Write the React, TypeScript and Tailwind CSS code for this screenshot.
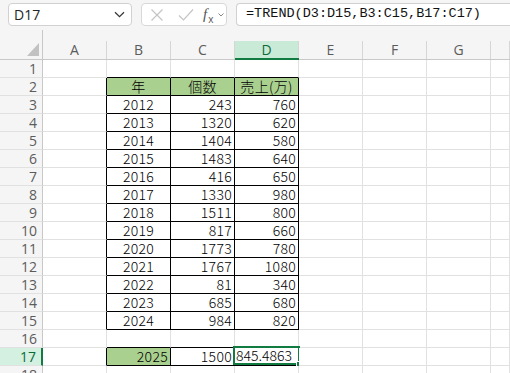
import React from "react";

const years = [2012, 2013, 2014, 2015, 2016, 2017, 2018, 2019, 2020, 2021, 2022, 2023, 2024];
const counts = [243, 1320, 1404, 1483, 416, 1330, 1511, 817, 1773, 1767, 81, 685, 984];
const sales = [760, 620, 580, 640, 650, 980, 800, 660, 780, 1080, 340, 680, 820];

const COLS = ["A", "B", "C", "D", "E", "F", "G", "H"];

function isB(r: number, c: number) {
  if (c < 1 || c > 3) return false;
  if (r >= 2 && r <= 15) return true;
  if (r === 17) return true;
  return false;
}

type CellInfo = { text: string; align: "left" | "center" | "right"; fill?: boolean };

function cellAt(r: number, c: number): CellInfo | null {
  if (r === 2) {
    if (c === 1) return { text: "年", align: "center", fill: true };
    if (c === 2) return { text: "個数", align: "center", fill: true };
    if (c === 3) return { text: "売上(万)", align: "center", fill: true };
  }
  if (r >= 3 && r <= 15) {
    const i = r - 3;
    if (c === 1) return { text: String(years[i]), align: "center" };
    if (c === 2) return { text: String(counts[i]), align: "right" };
    if (c === 3) return { text: String(sales[i]), align: "right" };
  }
  if (r === 17) {
    if (c === 1) return { text: "2025", align: "right", fill: true };
    if (c === 2) return { text: "1500", align: "right" };
    if (c === 3) return { text: "845.4863", align: "left" };
  }
  return null;
}

function Cell({ r, c }: { r: number; c: number }) {
  const info = cellAt(r, c);
  const rightBlack = isB(r, c) || isB(r, c + 1);
  const bottomBlack = isB(r, c) || isB(r + 1, c);
  const w = c === 7 ? "w-[19px]" : "w-[64px]";
  const rb = rightBlack ? "border-r-black" : "border-r-[#e1e1e1]";
  const bb = bottomBlack ? "border-b-black" : "border-b-[#e1e1e1]";
  const bg = info?.fill ? "bg-[#a9d08e]" : "bg-white";
  const al =
    info?.align === "center"
      ? "justify-center"
      : info?.align === "right"
      ? "justify-end pr-[2px]"
      : "justify-start pl-[1px]";
  const selected = r === 17 && c === 3;
  return (
    <div
      className={`relative ${w} h-[18px] shrink-0 border-r border-b ${rb} ${bb} ${bg} flex items-center ${al} text-[14px] font-light leading-[16px] text-black whitespace-nowrap ${
        selected ? "pb-[3px]" : "pb-[1px]"
      }`}
      style={{ fontFamily: '"Noto Sans CJK JP", "Noto Sans", sans-serif' }}
    >
      {info && (
        <span className={`h-[16px] ${selected ? "" : "tracking-[0.3px]"}`}>{info.text}</span>
      )}
      {selected && (
        <div className="absolute left-[-2px] top-[-2px] w-[67px] h-[19px] border-2 border-[#107c41]">
          <div className="absolute right-[-4px] bottom-[-4px] w-[6px] h-[6px] bg-[#107c41] border border-white" />
        </div>
      )}
    </div>
  );
}

function Row({ r }: { r: number }) {
  const sel = r === 17;
  return (
    <div className="flex h-[18px]">
      <div
        className={`w-[43px] h-[18px] shrink-0 border-b border-b-[#e1e1e1] flex items-center justify-end pr-[5px] text-[14px] leading-[16px] ${
          sel
            ? "bg-[#d3f0e0] border-r-2 border-r-[#107c41] text-[#0e6b38]"
            : "bg-[#f5f5f5] border-r border-r-[#c8c8c8] text-[#5c5c5c]"
        }`}
        style={{ fontFamily: '"Open Sans", "Noto Sans", sans-serif' }}
      >
        {r}
      </div>
      {COLS.map((_, c) => (
        <Cell key={c} r={r} c={c} />
      ))}
    </div>
  );
}

export default function App() {
  const rows = Array.from({ length: 18 }, (_, i) => i + 1);
  return (
    <div className="w-[510px] h-[373px] overflow-hidden bg-white">
      {/* formula bar */}
      <div className="h-[30px] bg-[#f5f5f5] flex items-start pt-[3px]">
        <div
          className="ml-[8px] w-[124px] h-[23px] bg-white border border-[#d1d1d1] rounded-[4px] flex items-center justify-between pl-[5px] pr-[6px] text-[14px] text-[#242424]"
          style={{ fontFamily: '"Open Sans", "Noto Sans", sans-serif' }}
        >
          <span>D17</span>
          <svg width="11" height="7" viewBox="0 0 11 7" fill="none">
            <path d="M1 1.2 L5.5 5.6 L10 1.2" stroke="#333" strokeWidth="1.2" />
          </svg>
        </div>
        <div className="ml-[9px] w-[86px] h-[23px] bg-white border border-[#d8d8d8] rounded-[4px] flex items-center pl-[8px]">
          <svg width="14" height="14" viewBox="0 0 14 14" fill="none">
            <path d="M1.5 1.5 L12.5 12.5 M12.5 1.5 L1.5 12.5" stroke="#c4c4c4" strokeWidth="1.2" />
          </svg>
          <svg className="ml-[14px]" width="16" height="14" viewBox="0 0 16 14" fill="none">
            <path d="M1 7.5 L5.5 12 L15 1.5" stroke="#c4c4c4" strokeWidth="1.2" />
          </svg>
          <span
            className="ml-[9px] text-[#555] leading-none flex items-end"
            style={{ fontFamily: '"Liberation Serif", serif' }}
          >
            <span className="italic text-[15px]">f</span>
            <span className="text-[10px] ml-[1px] mb-[-2px]" style={{ fontFamily: '"Open Sans", sans-serif' }}>x</span>
          </span>
          <svg className="ml-[5px]" width="6" height="4" viewBox="0 0 6 4" fill="none">
            <path d="M0.5 0.5 L3 3 L5.5 0.5" stroke="#888" strokeWidth="1" />
          </svg>
        </div>
        <div
          className="ml-[9px] flex-1 h-[23px] bg-white border border-r-0 border-[#d1d1d1] rounded-l-[4px] flex items-center pl-[9px] text-[13.5px] text-[#111]"
          style={{ fontFamily: '"Liberation Mono", monospace' }}
        >
          =TREND(D3:D15,B3:C15,B17:C17)
        </div>
      </div>
      {/* column headers */}
      <div className="flex h-[30px] bg-[#f5f5f5]">
        <div className="w-[43px] h-[30px] shrink-0 border-r border-b border-[#c8c8c8] flex items-end justify-end pr-[3px] pb-[3px]">
          <svg width="12" height="13" viewBox="0 0 12 13">
            <path d="M12 0 L12 13 L0 13 Z" fill="#c2c2c2" />
          </svg>
        </div>
        {COLS.map((L, c) => {
          const sel = c === 3;
          return (
            <div
              key={L}
              className={`${c === 7 ? "w-[19px]" : "w-[64px]"} h-[30px] shrink-0 flex flex-col ${
                sel ? "border-b-2 border-b-[#107c41]" : "border-b border-b-[#c8c8c8]"
              }`}
            >
              <div className="h-[11px]" />
              <div
                className={`flex-1 flex items-center justify-center border-r border-r-[#d6d6d6] text-[14px] leading-none ${
                  sel ? "bg-[#caead8] text-[#0e6b38]" : "text-[#5c5c5c]"
                }`}
                style={{ fontFamily: '"Open Sans", "Noto Sans", sans-serif' }}
              >
                {c === 7 ? "" : L}
              </div>
            </div>
          );
        })}
      </div>
      {rows.map((r) => (
        <Row key={r} r={r} />
      ))}
    </div>
  );
}
